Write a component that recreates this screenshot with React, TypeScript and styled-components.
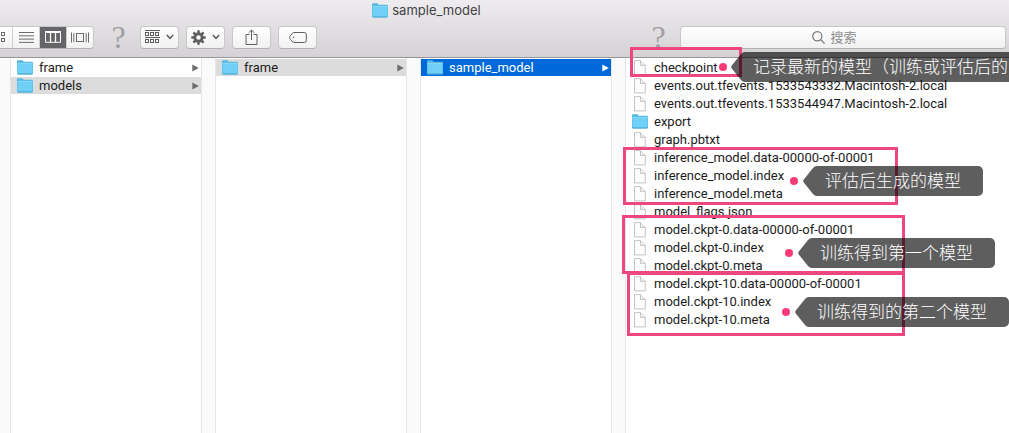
import React from "react";
import styled, { createGlobalStyle, css } from "styled-components";

const GlobalStyle = createGlobalStyle`
  * { box-sizing: border-box; }
  html, body { margin: 0; padding: 0; }
  body, button, input {
    font-family: Roboto, "Noto Sans CJK SC", sans-serif;
    font-size: 13px;
    line-height: 17px;
  }
  button { margin: 0; padding: 0; border: 0; background: none; color: inherit; }
  svg { display: block; flex: none; }
`;

const Window = styled.div`
  position: relative;
  display: flex;
  flex-direction: column;
  min-height: 100vh;
  overflow: hidden;
  background: #fff;
`;

const Header = styled.header`
  height: 58px;
  border-bottom: 1px solid #979598;
  background: linear-gradient(#eeecef, #d4d2d5);
`;

const Title = styled.h1`
  display: flex;
  align-items: center;
  justify-content: center;
  gap: 4px;
  margin: 0;
  padding-right: 156px;
  height: 20px;
  font-family: Inter, sans-serif;
  font-size: 13px;
  font-weight: 400;
  color: #424143;
`;

const Toolbar = styled.div`
  display: flex;
  align-items: center;
  gap: 7px;
  height: 34px;
  padding-right: 3px;
`;

const raised = css`
  height: 23px;
  border: 1px solid #c9c7ca;
  border-bottom-color: #b3b1b4;
  border-radius: 4px;
  background: linear-gradient(#fff, #f2f1f2);
`;

const Segments = styled.div`
  ${raised}
  display: flex;
  margin-left: -16px;
  overflow: hidden;
`;

const Segment = styled.button<{ $active?: boolean }>`
  display: flex;
  align-items: center;
  justify-content: center;
  width: 27px;
  height: 21px;
  border-left: 1px solid #cfcdd0;
  color: ${(p) => (p.$active ? "#fff" : "#6b6b6b")};
  background: ${(p) => (p.$active ? "#656466" : "transparent")};
`;

const ToolButton = styled.button`
  ${raised}
  display: flex;
  align-items: center;
  justify-content: center;
  gap: 6px;
  width: 39px;
  color: #5f5f5f;
`;

const Missing = styled.span`
  width: 32px;
  padding-left: 3px;
  text-align: center;
  font-family: "Liberation Serif", serif;
  font-size: 32px;
  line-height: 32px;
  color: #a19fa2;
`;

const Spacer = styled.div`
  flex: 1;
`;

const Search = styled.label`
  ${raised}
  display: flex;
  align-items: center;
  justify-content: center;
  gap: 6px;
  width: 326px;
  padding-right: 16px;
  color: #757575;
`;

const SearchInput = styled.input`
  width: 28px;
  padding: 0;
  border: 0;
  outline: 0;
  background: none;
  &::placeholder { color: #8c8c8c; opacity: 1; }
`;

const Browser = styled.main`
  display: flex;
  flex: 1;
`;

const Gutter = styled.div<{ $narrow?: boolean }>`
  flex: none;
  width: ${(p) => (p.$narrow ? "11px" : "15px")};
  border-right: 1px solid #e6e6e6;
  border-left: ${(p) => (p.$narrow ? "0" : "1px solid #e6e6e6")};
  background: #fafafa;
`;

const Column = styled.ul<{ $fill?: boolean }>`
  flex: ${(p) => (p.$fill ? "1" : "none")};
  width: 190px;
  margin: 0;
  padding: 1px 0 0;
  list-style: none;
`;

const Item = styled.button<{ $tone?: "grey" | "blue" }>`
  display: flex;
  align-items: center;
  gap: 6px;
  width: 100%;
  height: 17px;
  margin-bottom: 1px;
  padding: 0 2px 0 6px;
  text-align: left;
  white-space: nowrap;
  color: ${(p) => (p.$tone === "blue" ? "#fff" : "#1c1c1c")};
  background: ${(p) =>
    p.$tone === "blue" ? "#0069d9" : p.$tone === "grey" ? "#dcdcdc" : "transparent"};
`;

const Name = styled.span`
  flex: 1;
`;

const Frame = styled.div<{ $x: number; $y: number; $w: number; $h: number }>`
  position: absolute;
  left: ${(p) => p.$x}px;
  top: ${(p) => p.$y}px;
  width: ${(p) => p.$w}px;
  height: ${(p) => p.$h}px;
  border: 3px solid #ee477e;
  pointer-events: none;
`;

const Callout = styled.div<{ $x: number; $y: number }>`
  position: absolute;
  left: ${(p) => p.$x}px;
  top: ${(p) => p.$y}px;
  display: flex;
  align-items: center;
  color: rgba(0, 0, 0, 0.63);
`;

const Dot = styled.span<{ $gap: number }>`
  width: 8px;
  height: 8px;
  margin-right: ${(p) => p.$gap}px;
  border-radius: 50%;
  background: #fb3b78;
`;

const Bubble = styled.span`
  height: 30px;
  padding: 0 22px 0 7px;
  border-radius: 0 5px 5px 0;
  background: rgba(0, 0, 0, 0.63);
  color: #fff;
  font-family: "Noto Sans CJK SC", sans-serif;
  font-size: 17px;
  font-weight: 300;
  line-height: 28px;
  white-space: nowrap;
`;

const Folder = () => (
  <svg width="16" height="15" viewBox="0 0 16 15">
    <path d="M0 13.4V1.2Q0 0.3 1 0.3H5Q5.8 0.3 6.2 1L6.7 1.8H15Q16 1.8 16 2.7V13.4Q16 14.4 15 14.4H1Q0 14.4 0 13.4Z" fill="#55b9e2" />
    <path d="M0.5 3.8H15.5V13Q15.5 13.6 14.9 13.6H1.1Q0.5 13.6 0.5 13Z" fill="#6fcff5" />
    <path d="M0.5 3.4H15.5" stroke="#8cdcf8" />
    <path d="M0.8 14H15.2" stroke="#45a6cf" strokeWidth="0.8" />
  </svg>
);

const Doc = () => (
  <svg width="16" height="16" viewBox="0 0 16 16">
    <path d="M2.5 0.6H8.5L13.3 5.4V14.9H2.5Z" fill="#fdfdfd" stroke="#bdbdbd" strokeWidth="0.9" />
    <path d="M8.5 0.6V5.4H13.3" fill="#f1f1f1" stroke="#bdbdbd" strokeWidth="0.9" />
  </svg>
);

const Arrow = ({ light }: { light?: boolean }) => (
  <svg width="7" height="8" viewBox="0 0 7 8">
    <path d="M0.3 0.4L6.8 4L0.3 7.6Z" fill={light ? "#fff" : "#6d6d6d"} />
  </svg>
);

const Chevron = () => (
  <svg width="8" height="6" viewBox="0 0 8 6" fill="none" stroke="currentColor" strokeWidth="1.5">
    <path d="M0.8 1L4 4.3L7.2 1" />
  </svg>
);

const GridIcon = () => (
  <svg width="15" height="12" viewBox="0 0 15 12" fill="none" stroke="currentColor">
    {[2.5, 9.5].map((x) => (
      <React.Fragment key={x}>
        <rect x={x} y="1.5" width="3" height="3" />
        <rect x={x} y="7.5" width="3" height="3" />
      </React.Fragment>
    ))}
  </svg>
);

const ListIcon = () => (
  <svg width="15" height="11" viewBox="0 0 15 11" stroke="currentColor">
    <path d="M0 0.5H15M0 3.8H15M0 7.1H15M0 10.4H15" />
  </svg>
);

const ColumnsIcon = () => (
  <svg width="16" height="12" viewBox="0 0 16 12" fill="none" stroke="currentColor">
    <path d="M0.5 1V11.3H15.5V1" />
    <path d="M0 1H16" strokeWidth="2" />
    <path d="M5.5 1V11M10.5 1V11" strokeWidth="1.3" />
  </svg>
);

const CoverIcon = () => (
  <svg width="18" height="11" viewBox="0 0 18 11" fill="none" stroke="currentColor">
    <rect x="5.5" y="1.5" width="7" height="8" />
    <path d="M0.5 0.5V10.5M2.8 1V10M15.2 1V10M17.5 0.5V10.5" />
  </svg>
);

const ArrangeIcon = () => (
  <svg width="15" height="14" viewBox="0 0 15 14" fill="none" stroke="currentColor">
    <path d="M0 0.5H15M0 7.5H15" />
    {[0.5, 5.5, 10.5].map((x) => (
      <React.Fragment key={x}>
        <rect x={x} y="2.5" width="3" height="3" />
        <rect x={x} y="9.5" width="3" height="3" />
      </React.Fragment>
    ))}
  </svg>
);

const GearIcon = () => (
  <svg width="15" height="15" viewBox="0 0 15 15" stroke="currentColor">
    {[0, 45, 90, 135].map((a) => (
      <path key={a} d="M7.5 0.3V4M7.5 11V14.7" strokeWidth="2.5" transform={`rotate(${a} 7.5 7.5)`} />
    ))}
    <circle cx="7.5" cy="7.5" r="3.7" fill="none" strokeWidth="2.9" />
  </svg>
);

const ShareIcon = () => (
  <svg width="13" height="17" viewBox="0 0 13 17" fill="none" stroke="currentColor">
    <path d="M4.5 5.5H1V15.5H12V5.5H8.5M6.5 11V1M3.7 3.8L6.5 1L9.3 3.8" />
  </svg>
);

const TagIcon = () => (
  <svg width="18" height="11" viewBox="0 0 18 11" fill="none" stroke="currentColor">
    <path d="M5 0.5H15.5Q17.3 0.5 17.3 2.2V8.8Q17.3 10.5 15.5 10.5H5Q4.2 10.5 3.6 9.9L0.8 6.4Q0.2 5.5 0.8 4.6L3.6 1.1Q4.2 0.5 5 0.5Z" />
    <circle cx="4.4" cy="5.5" r="0.8" fill="currentColor" stroke="none" />
  </svg>
);

const SearchIcon = () => (
  <svg width="13" height="13" viewBox="0 0 13 13" fill="none" stroke="currentColor" strokeWidth="1.2">
    <circle cx="5.3" cy="5.3" r="4.6" />
    <path d="M8.7 8.7L12.5 12.5" />
  </svg>
);

const Tip = () => (
  <svg width="15" height="30" viewBox="0 0 15 30">
    <path d="M15 0H14Q11.5 0 10 2L0.8 13.4Q-0.4 15 0.8 16.6L10 28Q11.5 30 14 30H15Z" fill="currentColor" />
  </svg>
);

type Entry = { name: string; folder?: boolean; tone?: "grey" | "blue" };

const parents: Entry[][] = [
  [
    { name: "frame", folder: true },
    { name: "models", folder: true, tone: "grey" },
  ],
  [{ name: "frame", folder: true, tone: "grey" }],
  [{ name: "sample_model", folder: true, tone: "blue" }],
];

const files: Entry[] = [
  { name: "checkpoint" },
  { name: "events.out.tfevents.1533543332.Macintosh-2.local" },
  { name: "events.out.tfevents.1533544947.Macintosh-2.local" },
  { name: "export", folder: true },
  { name: "graph.pbtxt" },
  { name: "inference_model.data-00000-of-00001" },
  { name: "inference_model.index" },
  { name: "inference_model.meta" },
  { name: "model_flags.json" },
  { name: "model.ckpt-0.data-00000-of-00001" },
  { name: "model.ckpt-0.index" },
  { name: "model.ckpt-0.meta" },
  { name: "model.ckpt-10.data-00000-of-00001" },
  { name: "model.ckpt-10.index" },
  { name: "model.ckpt-10.meta" },
];

const frames = [
  { x: 630, y: 47, w: 112, h: 30 },
  { x: 623, y: 147, w: 275, h: 58 },
  { x: 622, y: 215, w: 283, h: 59 },
  { x: 627, y: 272, w: 278, h: 64 },
];

const callouts = [
  { x: 719, y: 52, gap: 4, text: "记录最新的模型（训练或评估后的" },
  { x: 790, y: 166, gap: 5, text: "评估后生成的模型" },
  { x: 785, y: 238, gap: 5, text: "训练得到第一个模型" },
  { x: 782, y: 297, gap: 5, text: "训练得到的第二个模型" },
];

const Row = ({ entry, arrow }: { entry: Entry; arrow?: boolean }) => (
  <li>
    <Item type="button" $tone={entry.tone}>
      {entry.folder ? <Folder /> : <Doc />}
      <Name>{entry.name}</Name>
      {arrow && <Arrow light={entry.tone === "blue"} />}
    </Item>
  </li>
);

export default function App() {
  return (
    <Window>
      <GlobalStyle />
      <Header>
        <Title>
          <Folder />
          sample_model
        </Title>
        <Toolbar>
          <Segments>
            <Segment type="button" aria-label="Icons"><GridIcon /></Segment>
            <Segment type="button" aria-label="List"><ListIcon /></Segment>
            <Segment type="button" aria-label="Columns" $active><ColumnsIcon /></Segment>
            <Segment type="button" aria-label="Cover flow"><CoverIcon /></Segment>
          </Segments>
          <Missing>?</Missing>
          <ToolButton type="button" aria-label="Arrange"><ArrangeIcon /><Chevron /></ToolButton>
          <ToolButton type="button" aria-label="Actions"><GearIcon /><Chevron /></ToolButton>
          <ToolButton type="button" aria-label="Share"><ShareIcon /></ToolButton>
          <ToolButton type="button" aria-label="Tags"><TagIcon /></ToolButton>
          <Spacer />
          <Missing>?</Missing>
          <Search>
            <SearchIcon />
            <SearchInput type="text" placeholder="搜索" aria-label="搜索" />
          </Search>
        </Toolbar>
      </Header>
      <Browser>
        <Gutter $narrow />
        {parents.map((entries, i) => (
          <React.Fragment key={i}>
            <Column>
              {entries.map((e) => <Row key={e.name} entry={e} arrow />)}
            </Column>
            <Gutter />
          </React.Fragment>
        ))}
        <Column $fill>
          {files.map((e) => <Row key={e.name} entry={e} />)}
        </Column>
      </Browser>
      {frames.map((f) => (
        <Frame key={f.y} $x={f.x} $y={f.y} $w={f.w} $h={f.h} />
      ))}
      {callouts.map((c) => (
        <Callout key={c.y} $x={c.x} $y={c.y}>
          <Dot $gap={c.gap} />
          <Tip />
          <Bubble>{c.text}</Bubble>
        </Callout>
      ))}
    </Window>
  );
}
